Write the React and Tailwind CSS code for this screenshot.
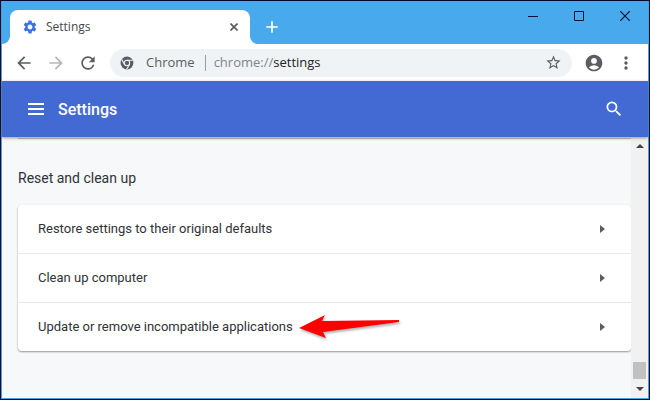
import React from 'react';
import {
  MdArrowBack, MdArrowForward, MdRefresh, MdStarBorder, MdAccountCircle,
  MdMoreVert, MdSearch, MdSettings, MdAdd,
} from 'react-icons/md';

const rows = [
  { label: 'Restore settings to their original defaults' },
  { label: 'Clean up computer' },
  { label: 'Update or remove incompatible applications', marked: true },
];

const ChromeLogo = () => (
  <svg width="14" height="14" viewBox="0 0 24 24" fill="none" aria-hidden="true">
    <circle cx="12" cy="12" r="11" fill="#5a5d61"/>
    <circle cx="12" cy="12" r="4.6" stroke="#f1f3f4" strokeWidth="1.8"/>
    <path d="M12 7.2h10M7.8 14.4L2.8 5.8M16.2 14.4l-5 8.6" stroke="#f1f3f4" strokeWidth="1.8"/>
  </svg>
);

const RedArrow = () => (
  <svg width="104" height="28" viewBox="0 0 104 28" className="shrink-0 -my-2 drop-shadow-[1px_2px_1px_rgba(0,0,0,0.3)]" aria-hidden="true">
    <path d="M0 15L26 2L23 8L100 7V9L24 19L27 25Z" fill="#fe0000"/>
  </svg>
);

const TitleBar = () => (
  <div className="flex h-[43px] bg-[#48a9ed]">
    <div className="flex items-end">
      <svg width="8" height="8" aria-hidden="true"><path d="M8 0v8H0a8 8 0 0 0 8-8z" fill="#fff"/></svg>
      <div className="flex items-center w-60 h-[34px] pl-3 pr-2 rounded-t-lg bg-white">
        <MdSettings size={16} className="text-[#3b72dc]"/>
        <span className="ml-2 flex-1 text-xs text-[#45484c]">Settings</span>
        <button aria-label="Close tab" className="flex items-center justify-center size-4 text-[#55585c]">
          <svg width="8" height="8"><path d="M.5.5l7 7M7.5.5l-7 7" stroke="currentColor" strokeWidth="1.6"/></svg>
        </button>
      </div>
      <svg width="8" height="8" aria-hidden="true"><path d="M0 0v8h8a8 8 0 0 1-8-8z" fill="#fff"/></svg>
      <button aria-label="New tab" className="flex items-center justify-center w-7 h-[34px] text-white"><MdAdd size={20}/></button>
    </div>
    <div className="flex ml-auto h-[30px] text-[#051038]">
      <button aria-label="Minimize" className="flex items-center justify-center w-[46px]">
        <svg width="10" height="10" shapeRendering="crispEdges"><path d="M0 5.5h10" stroke="currentColor"/></svg>
      </button>
      <button aria-label="Maximize" className="flex items-center justify-center w-[46px]">
        <svg width="10" height="10" fill="none"><path d="M.5.5h9v9h-9z" stroke="currentColor"/></svg>
      </button>
      <button aria-label="Close" className="flex items-center justify-center w-[46px]">
        <svg width="10" height="10"><path d="M0 0l10 10M10 0L0 10" stroke="currentColor" strokeWidth="1.2"/></svg>
      </button>
    </div>
  </div>
);

const Toolbar = () => (
  <div className="flex items-center h-[37px] px-3 bg-white text-[#5a5d61]">
    <div className="flex gap-3">
      <button aria-label="Back"><MdArrowBack size={20}/></button>
      <button aria-label="Forward" className="text-[#b4b6b8]"><MdArrowForward size={20}/></button>
      <button aria-label="Reload"><MdRefresh size={20}/></button>
    </div>
    <div className="flex items-center flex-1 h-7 mx-3 px-2.5 rounded-full bg-[#f0f3f5] text-[13px]">
      <ChromeLogo/>
      <span className="ml-3">Chrome</span>
      <span className="w-px h-4 ml-2.5 mr-2 bg-[#9a9da1]"/>
      <label htmlFor="address" className="text-[#80858a]">chrome://</label>
      <input id="address" defaultValue="settings" className="flex-1 min-w-0 bg-transparent text-[#202124] outline-none"/>
      <button aria-label="Bookmark"><MdStarBorder size={17}/></button>
    </div>
    <div className="flex gap-3">
      <button aria-label="Profile"><MdAccountCircle size={20}/></button>
      <button aria-label="Menu"><MdMoreVert size={20}/></button>
    </div>
  </div>
);

const Header = () => (
  <header className="relative flex items-center h-14 px-6 bg-[#436ad2] text-white shadow-[0_1px_3px_rgba(0,0,0,0.4)]">
    <button aria-label="Main menu" className="pl-0.5">
      <svg width="16" height="12"><path d="M0 0h16v2H0zM0 5h16v2H0zM0 10h16v2H0z" fill="currentColor"/></svg>
    </button>
    <h1 className="ml-3.5 pt-0.5 text-base font-medium">Settings</h1>
    <button aria-label="Search settings" className="ml-auto"><MdSearch size={20}/></button>
  </header>
);

const Scrollbar = () => (
  <div className="flex flex-col items-center w-[17px] py-[7px] bg-[#f1f1f1] text-[#404347]">
    <svg width="8" height="4"><path d="M0 4l4-4 4 4z" fill="currentColor"/></svg>
    <div className="w-[13px] h-[17px] mt-auto mb-2 bg-[#c1c1c1]"/>
    <svg width="8" height="4"><path d="M0 0l4 4 4-4z" fill="currentColor"/></svg>
  </div>
);

export default function App() {
  return (
    <div className="flex flex-col min-h-screen border border-[#030b2c] bg-[#030b2c] font-['Open_Sans','Noto_Sans',sans-serif]">
      <div className="flex flex-col flex-1 border-x border-b border-[#48a0dd]">
        <TitleBar/>
        <Toolbar/>
        <div className="flex flex-col flex-1 font-[Roboto,sans-serif]">
          <Header/>
          <div className="flex flex-1 bg-[#f6f8fa]">
            <main className="flex-1 pl-4 text-[#303236]">
              {/* bottom edge of the card scrolled under the header */}
              <div className="h-px shadow-[0_1px_1px_rgba(0,0,0,0.25)]"/>
              <h2 className="mt-[30px] mb-[17px] text-sm">Reset and clean up</h2>
              <div className="rounded bg-white text-[13px] leading-4 shadow-[0_1px_2px_rgba(0,0,0,0.4)] divide-y divide-[#e6e8ea]">
                {rows.map(({ label, marked }) => (
                  <button key={label} className="flex items-center w-full py-4 pl-5 pr-[26px] text-left">
                    <span className="mr-1.5">{label}</span>
                    {marked && <RedArrow/>}
                    <svg width="5" height="8" className="ml-auto"><path d="M0 0l5 4-5 4z" fill="#5a5d61"/></svg>
                  </button>
                ))}
              </div>
            </main>
            <Scrollbar/>
          </div>
        </div>
      </div>
    </div>
  );
}
